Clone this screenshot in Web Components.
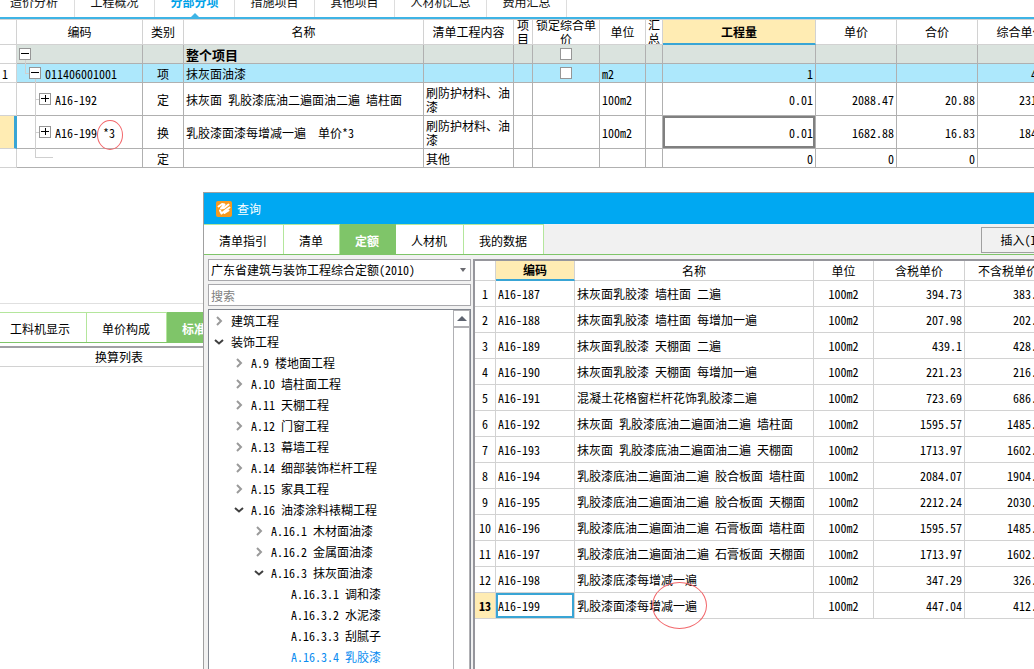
<!DOCTYPE html>
<html lang="zh-CN">
<head>
<meta charset="utf-8">
<title>分部分项</title>
<style>
  html, body { margin: 0; height: 100%; }
  body {
    overflow: hidden;
    background: #fff;
    color: #000;
    font: 12px/14px "Noto Sans Mono CJK SC", "Noto Sans CJK SC", "Liberation Sans", sans-serif;
    --blue: #3fb4e5;
    --blue-deep: #39a5d5;
    --green: #7fc569;
    --green-light: #b4e69c;
    --yellow: #ffecb3;
    --line: #d2d2d2;
    --line-dark: #b0b0b0;
  }
</style>
</head>
<body>
<cost-app></cost-app>

<script>
const define = (name, html, setup) => {
  const template = document.createElement('template');
  template.innerHTML = html;
  customElements.define(name, class extends HTMLElement {
    constructor() {
      super();
      this.attachShadow({ mode: 'open' }).append(template.content.cloneNode(true));
    }
    connectedCallback() {
      if (setup && !this.ready) { this.ready = true; setup(this, this.shadowRoot); }
    }
  });
};

/* Tab strip across the top of the workspace */
define('top-tabs', `
<style>
  :host { display: block; height: 17px; overflow: hidden; border-bottom: 2px solid var(--blue); }
  nav { display: flex; margin: -14px 0 0 -6px; }
  button {
    position: relative; flex: none; height: 31px; width: 80px; padding: 0; font: inherit; color: #111;
    background: #fff; border: 0; border-right: 1px solid #ddd;
  }
  button.first { width: 81px; }
  button.wide { width: 92px; }
  button[aria-selected=true] { color: #00a2e8; font-weight: bold; }
  button[aria-selected=true]::after {
    content: ""; position: absolute; left: 50%; bottom: 0; margin-left: -4px;
    border: 4px solid transparent; border-top: 0; border-bottom-color: var(--blue);
  }
</style>
<nav role="tablist">
  <button role="tab" class="first">造价分析</button><button role="tab">工程概况</button><button
  role="tab" aria-selected="true">分部分项</button><button role="tab">措施项目</button><button
  role="tab">其他项目</button><button role="tab" class="wide">人材机汇总</button><button role="tab">费用汇总</button>
</nav>`);

/* Green tab strip; each item is "text" or "*text" for the current one */
define('green-tabs', `
<style>
  :host { display: flex; height: 30px; border-bottom: 1px solid var(--green); }
  nav { display: flex; }
  button {
    flex: none; height: 30px; padding: 2px 16px 0 15px; white-space: nowrap; font: inherit; color: #000; background: #fff;
    border: 0; border-top: 1px solid var(--green-light); border-right: 1px solid var(--green-light);
  }
  button[aria-selected=true] { background: var(--green); color: #fff; font-weight: bold; border-color: var(--green); }
  .rest { flex: 1; display: flex; justify-content: flex-end; }
</style>
<nav role="tablist"></nav><div class="rest"><slot></slot></div>`,
(host, root) => {
  for (const item of host.getAttribute('items').split(',')) {
    const b = document.createElement('button');
    b.setAttribute('role', 'tab');
    b.setAttribute('aria-selected', item.startsWith('*'));
    b.textContent = item.replace('*', '');
    root.querySelector('nav').append(b);
  }
});

/* Square expand / collapse box */
define('expand-box', `
<style>
  :host { display: block; flex: none; width: 12px; height: 12px; position: relative; }
  button { display: block; width: 12px; height: 12px; padding: 0; border: 1px solid #969696; background: #fff; }
  svg { display: block; }
  .v { display: none; }
  :host([closed]) .v { display: inline; }
</style>
<button aria-label="展开或折叠"><svg width="10" height="10" viewBox="0 0 10 10" fill="#000">
<rect x="1" y="4" width="8" height="1"/><rect class="v" x="5" y="1" width="1" height="7"/></svg></button>`);

define('red-ring', `
<style>
  :host { display: block; position: absolute; pointer-events: none; z-index: 3; box-sizing: border-box;
    border: 1px solid #f2666a; border-radius: 50%; }
</style>`);

/* Main bill of quantities */
define('cost-grid', `
<style>
  :host { display: block; overflow: hidden; border-top: 1px solid var(--line); }
  table { table-layout: fixed; width: calc(100% + 30px); border-spacing: 0; }
  th, td { box-sizing: border-box; padding: 2px 2px 0; border: 0 solid var(--line-dark); border-width: 0 1px 1px 0; font-weight: normal; text-align: left; }
  th, .no { border-color: var(--line); }
  th { height: 25px; padding: 0; text-align: center; }
  th div { display: flex; height: 24px; overflow: hidden; align-items: center; justify-content: center; }
  th.on { background: var(--yellow); font-weight: bold; border-bottom: 2px solid var(--blue-deep); }
  th.on div { height: 23px; }
  td.num { text-align: right; }
  td.mid { text-align: center; }
  td.code, td.check { padding: 0; }
  td.code { position: relative; }
  tr.short td { height: 19px; }
  tr.tall td { height: 33px; }
  tr.total td:not(.no) { background: #dae3de; }
  tr.item td:not(.no) { background: #ade8fc; }
  tr.current .no { background: var(--yellow); border-right: 3px solid var(--blue-deep); }
  tr.current .focus { box-shadow: inset 0 0 0 2px #808080; }
  .label { display: flex; align-items: center; gap: 4px; }
  .label span { padding-top: 2px; }
  .l0 { padding-left: 2px; } .l1 { padding-left: 12px; } .l2 { padding-left: 22px; }
  .v, .h { position: absolute; background: #cfcfcf; }
  .v { width: 1px; } .h { height: 1px; }
  b { font-weight: bold; font-size: 13px; }
  input { display: block; appearance: none; margin: 0 auto; width: 12px; height: 12px; border: 1px solid #969696; background: #fff; }
  red-ring { left: 80px; top: 4px; width: 26px; height: 30px; }
</style>
<table>
  <colgroup><col style="width:17px"><col style="width:126px"><col style="width:41px"><col><col style="width:90px"><col style="width:19px"><col style="width:67px"><col style="width:46px"><col style="width:17px"><col style="width:153px"><col style="width:81px"><col style="width:81px"><col style="width:86px"></colgroup>
  <thead><tr>
    <th></th><th><div>编码</div></th><th><div>类别</div></th><th><div>名称</div></th><th><div>清单工程内容</div></th><th><div>项<br>目</div></th><th><div>锁定综合单<br>价</div></th><th><div>单位</div></th><th><div>汇<br>总</div></th><th class="on"><div>工程量</div></th><th><div>单价</div></th><th><div>合价</div></th><th><div>综合单价</div></th>
  </tr></thead>
  <tbody>
    <tr class="short total"><td class="no"></td>
      <td class="code"><div class="label l0"><i class="v" style="left:8px;top:14px;height:5px"></i><expand-box></expand-box></div></td>
      <td></td><td><b>整个项目</b></td><td></td><td></td><td class="check"><input type="checkbox" aria-label="锁定整个项目"></td><td></td><td></td><td></td><td></td><td></td><td></td></tr>
    <tr class="short item"><td class="no">1</td>
      <td class="code"><div class="label l1"><i class="v" style="left:8px;top:0;height:9px"></i><i class="h" style="left:8px;top:9px;width:4px"></i><i class="v" style="left:18px;top:15px;height:4px"></i><expand-box></expand-box><span>011406001001</span></div></td>
      <td class="mid">项</td><td>抹灰面油漆</td><td></td><td></td><td class="check"><input type="checkbox" aria-label="锁定综合单价"></td><td>m2</td><td></td><td class="num">1</td><td></td><td></td><td class="num">41.61</td></tr>
    <tr class="tall"><td class="no"></td>
      <td class="code"><div class="label l2"><i class="v" style="left:18px;top:0;height:33px"></i><i class="h" style="left:18px;top:16px;width:4px"></i><expand-box closed></expand-box><span>A16-192</span></div></td>
      <td class="mid">定</td><td>抹灰面 乳胶漆底油二遍面油二遍 墙柱面</td><td>刷防护材料、油漆</td><td></td><td></td><td>100m2</td><td></td><td class="num">0.01</td><td class="num">2088.47</td><td class="num">20.88</td><td class="num">2316.02</td></tr>
    <tr class="tall current"><td class="no"></td>
      <td class="code"><div class="label l2"><i class="v" style="left:18px;top:0;height:33px"></i><i class="h" style="left:18px;top:16px;width:4px"></i><expand-box closed></expand-box><span>A16-199 *3</span></div><red-ring></red-ring></td>
      <td class="mid">换</td><td>乳胶漆面漆每增减一遍&nbsp; 单价*3</td><td>刷防护材料、油漆</td><td></td><td></td><td>100m2</td><td></td><td class="num focus">0.01</td><td class="num">1682.88</td><td class="num">16.83</td><td class="num">1845.24</td></tr>
    <tr class="short"><td class="no"></td>
      <td class="code"><i class="v" style="left:18px;top:0;height:8px"></i><i class="h" style="left:18px;top:8px;width:18px"></i></td>
      <td class="mid">定</td><td></td><td>其他</td><td></td><td></td><td></td><td></td><td class="num">0</td><td class="num">0</td><td class="num">0</td><td class="num">0</td></tr>
  </tbody>
</table>`);

/* Lower pane, partly under the query window */
define('detail-pane', `
<style>
  :host { display: block; border-top: 1px solid #e0e0e0; padding-top: 8px; }
  .list { margin-top: 3px; border-top: 2px solid #a0a0a4; }
  table { width: 238px; border-spacing: 0; }
  th { height: 18px; padding: 0; font-weight: normal; border-bottom: 1px solid var(--line); }
  green-tabs { margin-left: -5px; }
</style>
<green-tabs items="工料机显示,单价构成,*标准换算"></green-tabs>
<div class="list"><table><tr><th>换算列表</th></tr></table></div>`);

/* Outline of quota chapters: [level, state, text] */
define('quota-tree', `
<style>
  :host { display: flex; flex: 1; min-height: 0; overflow: hidden; background: #fff; border: 1px solid #828790; border-bottom: 0; }
  ul { flex: 1; margin: 0; padding: 0; list-style: none; }
  li { display: flex; align-items: center; height: 21px; white-space: nowrap; }
  svg { flex: none; width: 10px; margin: 0 7px 0 5px; }
  path { fill: none; stroke-width: 2; stroke: #9a9a9a; }
  .open path { stroke: #404040; }
  .leaf svg { visibility: hidden; }
  .current { color: #0a8cf0; }
  .bar { flex: none; width: 15px; border: 1px solid #b0b0b4; border-width: 0 1px; }
  .bar button { display: flex; align-items: center; justify-content: center; width: 15px; height: 18px; padding: 0; border: 0; background: #fff; border-top: 1px solid #b0b0b4; border-bottom: 2px solid #b0b0b4; }
  .bar i { border: 5px solid transparent; border-top: 0; border-bottom-color: #5f6470; }
</style>
<ul></ul><div class="bar"><button aria-label="向上滚动"><i></i></button></div>`,
(host, root) => {
  const rows = [
    [0, 'shut', '建筑工程'], [0, 'open', '装饰工程'], [1, 'shut', 'A.9 楼地面工程'], [1, 'shut', 'A.10 墙柱面工程'],
    [1, 'shut', 'A.11 天棚工程'], [1, 'shut', 'A.12 门窗工程'], [1, 'shut', 'A.13 幕墙工程'],
    [1, 'shut', 'A.14 细部装饰栏杆工程'], [1, 'shut', 'A.15 家具工程'], [1, 'open', 'A.16 油漆涂料裱糊工程'],
    [2, 'shut', 'A.16.1 木材面油漆'], [2, 'shut', 'A.16.2 金属面油漆'], [2, 'open', 'A.16.3 抹灰面油漆'],
    [3, 'leaf', 'A.16.3.1 调和漆'], [3, 'leaf', 'A.16.3.2 水泥漆'], [3, 'leaf', 'A.16.3.3 刮腻子'],
    [3, 'leaf current', 'A.16.3.4 乳胶漆']
  ];
  root.querySelector('ul').innerHTML = rows.map(([level, state, text]) => `
    <li class="${state}" style="padding-left:${level * 20}px"><svg height="10" viewBox="0 0 10 10"><path d="${
      state === 'open' ? 'M1 3l4 3.5L9 3' : 'M3 1l4 4-4 4'}"/></svg><span>${text}</span></li>`).join('');
});

/* Quota price list */
define('quota-table', `
<style>
  :host { display: block; overflow: hidden; background: #fff; border-top: 2px solid #96969c; border-left: 2px solid #96969c; }
  table { table-layout: fixed; width: calc(100% + 18px); border-spacing: 0; }
  th, td { box-sizing: border-box; height: 26px; padding: 0 2px; border: 0 solid var(--line); border-width: 0 1px 1px 0; font-weight: normal; white-space: nowrap; text-align: center; }
  th { height: 20px; padding: 0; }
  th.on { background: var(--yellow); font-weight: bold; border-bottom: 2px solid var(--blue-deep); }
  .l { text-align: left; } .r { text-align: right; }
  .name { position: relative; }
  .no { padding: 0; }
  .current .no { background: var(--yellow); font-weight: bold; }
  .current .code { box-shadow: inset 0 0 0 2px var(--blue-deep); }
  red-ring { left: 77px; top: -11px; width: 55px; height: 47px; }
</style>
<table>
  <colgroup><col style="width:21px"><col style="width:79px"><col><col style="width:60px"><col style="width:91px"><col style="width:87px"></colgroup>
  <thead><tr><th></th><th class="on">编码</th><th>名称</th><th>单位</th><th>含税单价</th><th>不含税单价</th></tr></thead>
  <tbody></tbody>
</table>`,
(host, root) => {
  const rows = [
    ['抹灰面乳胶漆 墙柱面 二遍', '394.73', '383.31'],
    ['抹灰面乳胶漆 墙柱面 每增加一遍', '207.98', '202.13'],
    ['抹灰面乳胶漆 天棚面 二遍', '439.1', '428.05'],
    ['抹灰面乳胶漆 天棚面 每增加一遍', '221.23', '216.11'],
    ['混凝土花格窗栏杆花饰乳胶漆二遍', '723.69', '686.42'],
    ['抹灰面 乳胶漆底油二遍面油二遍 墙柱面', '1595.57', '1485.21'],
    ['抹灰面 乳胶漆底油二遍面油二遍 天棚面', '1713.97', '1602.35'],
    ['乳胶漆底油二遍面油二遍 胶合板面 墙柱面', '2084.07', '1904.18'],
    ['乳胶漆底油二遍面油二遍 胶合板面 天棚面', '2212.24', '2030.44'],
    ['乳胶漆底油二遍面油二遍 石膏板面 墙柱面', '1595.57', '1485.21'],
    ['乳胶漆底油二遍面油二遍 石膏板面 天棚面', '1713.97', '1602.35'],
    ['乳胶漆底漆每增减一遍', '347.29', '326.15'],
    ['乳胶漆面漆每增减一遍', '447.04', '412.27']
  ];
  root.querySelector('tbody').innerHTML = rows.map(([name, gross, net], i) => {
    const last = i === rows.length - 1;
    return `<tr class="${last ? 'current' : ''}"><td class="no">${i + 1}</td><td class="l code">A16-${187 + i}</td>
      <td class="l name">${name}${last ? '<red-ring></red-ring>' : ''}</td><td>100m2</td><td class="r">${gross}</td><td class="r">${net}</td></tr>`;
  }).join('');
});

define('query-window', `
<style>
  :host { display: flex; flex-direction: column; box-sizing: border-box; background: #f1f1f1; border: 1px solid #a0a0a0; border-width: 1px 0 0 1px; overflow: hidden; }
  header { flex: none; display: flex; align-items: center; gap: 5px; height: 31px; padding-left: 12px; background: #00a8f2; color: #fff; }
  green-tabs { flex: none; }
  .insert { height: 26px; margin: 3px -28px 0 0; width: 81px; padding: 0; font: inherit; color: #000; background: #f1f1f1; border: 1px solid #a0a0a0; }
  main { flex: 1; display: flex; min-height: 0; gap: 2px; padding: 4px 0 0 4px; }
  .side { flex: none; width: 263px; display: flex; flex-direction: column; }
  .pick { position: relative; display: flex; margin-bottom: 3px; }
  .pick svg { position: absolute; right: 5px; top: 9px; }
  select, input { box-sizing: border-box; appearance: none; width: 100%; height: 22px; margin: 0; padding: 0 2px; font: inherit; color: #000; background: #fff; border: 1px solid #a8a8ac; border-radius: 0; }
  input { flex: none; margin-bottom: 3px; }
  input::placeholder { color: #808080; opacity: 1; }
  quota-table { flex: 1; min-width: 0; }
</style>
<header>
  <svg width="16" height="16" viewBox="0 0 16 16"><rect width="16" height="16" rx="2" fill="#f79a1e"/>
    <g fill="none" stroke="#fff" stroke-linecap="round" stroke-linejoin="round">
    <path stroke-width="2" d="M2.5 5.5L6 3L8.5 3.5L5 7.5L8 7L12.5 3.5"/>
    <path stroke-width="2" d="M4 9.5L5.5 12.5L10.5 8.5L13.5 6.5M8.5 12L12.5 9.5"/></g></svg>
  <span>查询</span>
</header>
<green-tabs items="清单指引,清单,*定额,人材机,我的数据"><button class="insert">插入(I)</button></green-tabs>
<main>
  <div class="side">
    <div class="pick"><select aria-label="定额库"><option>广东省建筑与装饰工程综合定额(2010)</option></select>
      <svg width="6" height="4" viewBox="0 0 6 4"><path d="M0 0h6L3 4z" fill="#6a6a70"/></svg></div>
    <input type="text" placeholder="搜索" aria-label="搜索">
    <quota-tree></quota-tree>
  </div>
  <quota-table></quota-table>
</main>`);

define('cost-app', `
<style>
  :host { display: block; position: relative; height: 100vh; overflow: hidden; }
  .upper { min-height: 303px; }
  query-window { position: absolute; left: 203px; top: 192px; right: 0; bottom: 0; }
</style>
<div class="upper"><top-tabs></top-tabs><cost-grid></cost-grid></div>
<detail-pane></detail-pane>
<query-window></query-window>`);
</script>
</body>
</html>
